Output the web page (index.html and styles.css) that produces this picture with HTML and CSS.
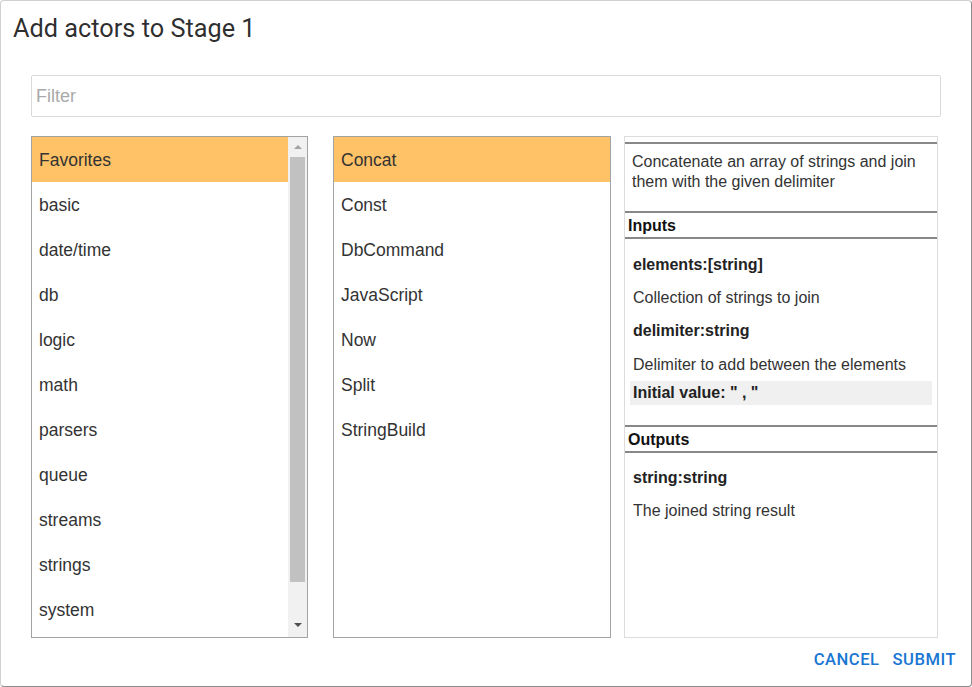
FILE: index.html
```html
<!DOCTYPE html>
<html>
<head>
<meta charset="utf-8">
<link rel="stylesheet" href="styles.css">
</head>
<body>
<div class="dialog">
  <h2 class="title">Add actors to Stage 1</h2>
  <div class="content">
    <div class="filter"><input class="filter-input" type="text" placeholder="Filter"></div>
    <div class="lists">
      <div class="list list-cats">
        <div class="list-items">
          <div class="item selected">Favorites</div>
          <div class="item">basic</div>
          <div class="item">date/time</div>
          <div class="item">db</div>
          <div class="item">logic</div>
          <div class="item">math</div>
          <div class="item">parsers</div>
          <div class="item">queue</div>
          <div class="item">streams</div>
          <div class="item">strings</div>
          <div class="item">system</div>
        </div>
        <div class="scrollbar">
          <div class="arrow arrow-up"></div>
          <div class="thumb"></div>
          <div class="arrow arrow-down"></div>
        </div>
      </div>
      <div class="list list-actors">
        <div class="item selected">Concat</div>
        <div class="item">Const</div>
        <div class="item">DbCommand</div>
        <div class="item">JavaScript</div>
        <div class="item">Now</div>
        <div class="item">Split</div>
        <div class="item">StringBuild</div>
      </div>
      <div class="details">
        <div class="desc">Concatenate an array of strings and join them with the given delimiter</div>
        <div class="section-head">Inputs</div>
        <div class="param-name p-first">elements:[string]</div>
        <div class="param-desc">Collection of strings to join</div>
        <div class="param-name">delimiter:string</div>
        <div class="param-desc pd-wide">Delimiter to add between the elements</div>
        <div class="initial">Initial value: " , "</div>
        <div class="section-head sh-out">Outputs</div>
        <div class="param-name p-first-out">string:string</div>
        <div class="param-desc">The joined string result</div>
      </div>
    </div>
  </div>
  <div class="actions">
    <span class="btn">CANCEL</span>
    <span class="btn">SUBMIT</span>
  </div>
</div>
</body>
</html>
```
FILE: styles.css
```css
* { box-sizing: border-box; }
html, body { margin: 0; padding: 0; background: #ffffff; }
.dialog {
  width: 972px;
  height: 687px;
  border: 1px solid #d0d0d0;
  border-right-color: #8c8c8c;
  border-bottom-color: #8c8c8c;
  border-radius: 4px;
  background: #fff;
  display: flex;
  flex-direction: column;
  overflow: hidden;
}
.title {
  margin: 0;
  padding: 10px 12px 0;
  height: 74px;
  font-family: Roboto, "Liberation Sans", sans-serif;
  font-weight: 400;
  font-size: 25.3px;
  line-height: 35px;
  color: rgba(0,0,0,0.84);
}
.content {
  padding: 0 30px;
}
.filter-input {
  display: block;
  width: 910px;
  height: 42px;
  border: 1px solid #d9d9d9;
  border-radius: 2px;
  padding: 0 4px;
  font-family: "Liberation Sans", Arial, sans-serif;
  font-size: 18px;
  color: #333;
  outline: none;
}
.filter-input::placeholder { color: #aaaaaa; }
.lists {
  display: flex;
  margin-top: 19px;
  height: 502px;
}
.list {
  height: 502px;
  border: 1px solid #a3a3a3;
  font-family: "Liberation Sans", Arial, sans-serif;
  font-size: 17.5px;
  color: #333;
}
.list-cats {
  width: 277px;
  display: flex;
}
.list-items { flex: 1; }
.list-actors {
  width: 278px;
  margin-left: 25px;
}
.item {
  height: 45px;
  padding-top: 2px;
  line-height: 43px;
  padding-left: 7px;
}
.item.selected { background: #ffc266; }
.scrollbar {
  width: 19px;
  background: #f1f1f1;
  display: flex;
  flex-direction: column;
  align-items: center;
}
.arrow {
  width: 0; height: 0;
  border-left: 4px solid transparent;
  border-right: 4px solid transparent;
}
.arrow-up { border-bottom: 4px solid #a3a3a3; margin-top: 8px; margin-bottom: 8px; }
.arrow-down { border-top: 4px solid #505050; margin-top: auto; margin-bottom: 10px; }
.thumb {
  width: 15px;
  height: 425px;
  background: #c1c1c1;
}
.details {
  width: 314px;
  margin-left: 13px;
  border: 1px solid #dcdcdc;
  font-family: "Liberation Sans", Arial, sans-serif;
  font-size: 16px;
  color: #333;
  padding-top: 5px;
}
.desc {
  border-top: 2px solid #888;
  padding: 8px 7px 19px;
  line-height: 20px;
}
.section-head {
  border-top: 2px solid #888;
  border-bottom: 2px solid #888;
  height: 28px;
  padding-top: 2px;
  line-height: 22px;
  padding-left: 3px;
  font-weight: bold;
  font-size: 16px;
  color: #111;
}
.sh-out { margin-top: 20px; }
.param-name {
  font-weight: bold;
  color: #222;
  line-height: 20px;
  padding-left: 8px;
  margin-top: 13px;
}
.p-first { margin-top: 16px; }
.p-first-out { margin-top: 15px; }
.param-desc {
  line-height: 20px;
  padding-left: 8px;
  margin-top: 13px;
}
.pd-wide { margin-top: 14px; }
.initial {
  margin: 6px 5px 0;
  background: #f0f0f0;
  height: 24px;
  line-height: 24px;
  padding-left: 3px;
  font-weight: bold;
  color: #222;
}
.actions {
  display: flex;
  justify-content: flex-end;
  gap: 13px;
  padding-right: 15px;
  margin-top: 12px;
}
.btn {
  font-family: Roboto, "Liberation Sans", sans-serif;
  font-weight: 500;
  font-size: 16.6px;
  letter-spacing: 0.5px;
  line-height: 20px;
  color: #1976d2;
}
```
